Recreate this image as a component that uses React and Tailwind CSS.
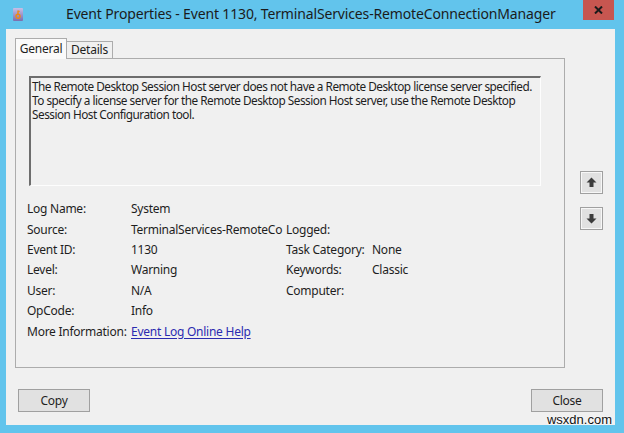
import React from "react";

const font = { fontFamily: '"Noto Sans", "Open Sans", sans-serif' };

function ArrowBtn({ down }) {
  return (
    <button className="w-[23px] h-[23px] border border-[#a0a0a0] bg-[#e1e1e1] flex items-center justify-center p-0 shadow-[inset_0_0_0_1px_#f7f7f7]">
      <svg width="11" height="11" viewBox="0 0 11 11" className={down ? "rotate-180" : ""}>
        <polygon points="5.5,0.5 10.5,5.5 7.5,5.5 7.5,10 3.5,10 3.5,5.5 0.5,5.5" fill="#3c3c3c" />
      </svg>
    </button>
  );
}

function Row({ label, value, lw = "w-[104px]", link }) {
  return (
    <div className="flex h-[20.4px] items-center whitespace-nowrap">
      <span className={`${lw} shrink-0`}>{label}</span>
      {value ? (
        <span className={link ? "text-[#2b2bb0] underline underline-offset-2" : ""}>{value}</span>
      ) : null}
    </div>
  );
}

export default function App() {
  return (
    <div
      className="relative w-[624px] h-[433px] bg-[#62c4ec] flex flex-col text-[#1e1e1e] overflow-hidden"
      style={font}
    >
      {/* title bar */}
      <div className="h-[29px] flex items-start shrink-0">
        <div className="ml-[13px] mt-[8px] w-[10px] h-[13px] rounded-[1px] bg-gradient-to-b from-[#c9bfe6] to-[#7a6fae] flex items-center justify-center">
          <svg width="6" height="9" viewBox="0 0 6 9">
            <circle cx="3" cy="6.3" r="2" fill="none" stroke="#f08a10" strokeWidth="1.4" />
            <line x1="3" y1="4.3" x2="3" y2="0.5" stroke="#f08a10" strokeWidth="1.4" />
            <line x1="3" y1="1.3" x2="4.8" y2="1.3" stroke="#f08a10" strokeWidth="1.1" />
          </svg>
        </div>
        <div className="ml-[43px] mt-[4px] text-[14px] leading-[20px] tracking-[-0.15px] text-[#1b1b1b] whitespace-nowrap">
          Event Properties - Event 1130, TerminalServices-RemoteConnectionManager
        </div>
        <div className="ml-auto mr-[10px] w-[31px] h-[20px] bg-[#c75650] flex items-center justify-center">
          <svg width="9" height="8" viewBox="0 0 9 8">
            <path d="M1 0.5 L8 7.5 M8 0.5 L1 7.5" stroke="#1a1a1a" strokeWidth="2" />
          </svg>
        </div>
      </div>

      {/* client area */}
      <div className="ml-[6px] mr-[9px] mb-[8px] flex-1 bg-[#f0f0f0] flex flex-col text-[12px] leading-[14px] tracking-[-0.25px]">
        <div className="flex pl-[9px] pt-[9px]">
          <div className="w-[550px] shrink-0 flex flex-col">
            {/* tabs */}
            <div className="flex items-end h-[20px]">
              <div className="h-[21px] w-[52px] border border-b-0 border-[#acacac] bg-[#fafafa] flex items-center justify-center relative -mb-px z-10">
                General
              </div>
              <div className="h-[17px] w-[46px] border border-l-0 border-b-0 border-[#acacac] bg-[#f0f0f0] flex items-center justify-center">
                Details
              </div>
            </div>
            {/* panel */}
            <div className="h-[310px] border border-[#acacac] bg-[#f0f0f0] pl-[13px] pt-[17px] flex flex-col">
              <div className="w-[512px] h-[110px] border-t-2 border-l-2 border-t-[#6d6d6d] border-l-[#6d6d6d] border-r border-b border-r-[#fdfdfd] border-b-[#fdfdfd] bg-[#f0f0f0] pl-[1px] pt-[1px] text-[11.8px] tracking-[-0.5px] leading-[14px] whitespace-nowrap">
                <div>The Remote Desktop Session Host server does not have a Remote Desktop license server specified.</div>
                <div>To specify a license server for the Remote Desktop Session Host server, use the Remote Desktop</div>
                <div>Session Host Configuration tool.</div>
              </div>
              <div className="flex mt-[13px] -ml-[2px]">
                <div className="w-[259px] shrink-0 flex flex-col">
                  <Row label="Log Name:" value="System" />
                  <Row label="Source:" value="TerminalServices-RemoteCo" />
                  <Row label="Event ID:" value="1130" />
                  <Row label="Level:" value="Warning" />
                  <Row label="User:" value="N/A" />
                  <Row label="OpCode:" value="Info" />
                  <Row label="More Information:" value="Event Log Online Help" link />
                </div>
                <div className="flex flex-col pt-[20.4px]">
                  <Row label="Logged:" lw="w-[86px]" />
                  <Row label="Task Category:" value="None" lw="w-[86px]" />
                  <Row label="Keywords:" value="Classic" lw="w-[86px]" />
                  <Row label="Computer:" lw="w-[86px]" />
                </div>
              </div>
            </div>
          </div>
          {/* up/down */}
          <div className="flex flex-col gap-[13px] pl-[15px] pt-[133px]">
            <ArrowBtn />
            <ArrowBtn down />
          </div>
        </div>

        {/* bottom buttons */}
        <div className="flex justify-between pl-[12px] pr-[12px] mt-[21px]">
          <button className="w-[72px] h-[23px] border border-[#a0a0a0] bg-[#e1e1e1] text-[12px]">Copy</button>
          <button className="w-[72px] h-[23px] border border-[#a0a0a0] bg-[#e1e1e1] text-[12px]">Close</button>
        </div>
      </div>

      <div
        className="absolute right-[12px] bottom-[6px] text-[13px] leading-[14px] text-[#111] [text-shadow:0_0_2px_#fff,0_0_2px_#fff]"
        style={{ fontFamily: '"Liberation Sans", Arial, sans-serif' }}
      >
        wsxdn.com
      </div>
    </div>
  );
}
